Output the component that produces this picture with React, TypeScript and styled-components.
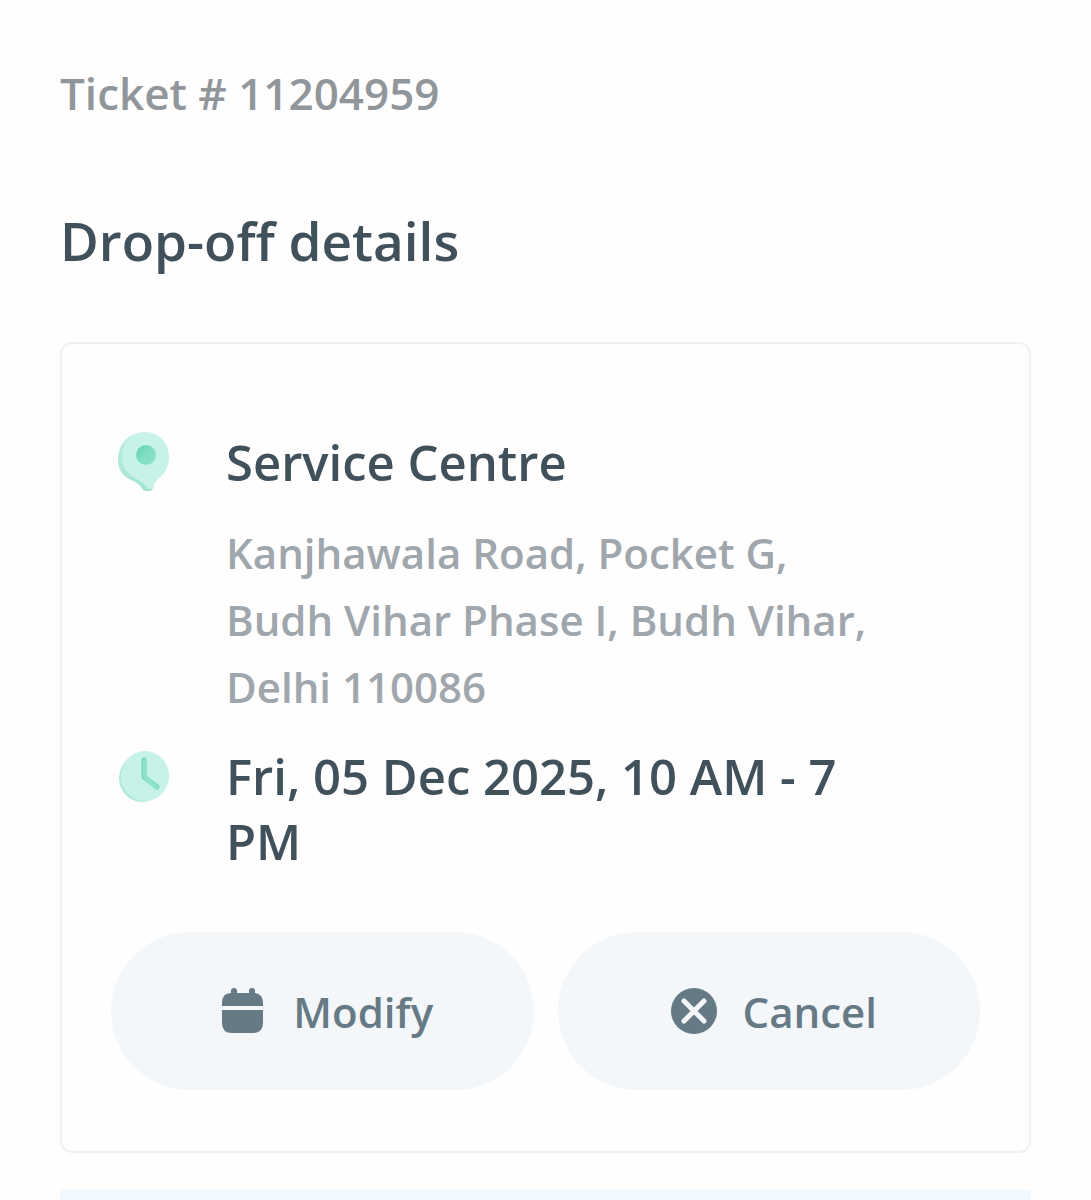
import React from "react";
import styled, { createGlobalStyle } from "styled-components";

const GlobalStyle = createGlobalStyle`
  *, *::before, *::after { box-sizing: border-box; }
  body {
    margin: 0;
    background: #fefefe;
    font-family: "Open Sans", "Noto Sans", sans-serif;
    font-weight: 600;
    color: #41515c;
  }
`;

const Page = styled.main`
  display: flex;
  flex-direction: column;
  padding: 62px 60px 0;
  min-height: 100vh;
`;

const Ticket = styled.p`
  margin: 0;
  font-size: 44px;
  line-height: 62px;
  color: #909699;
`;

const Title = styled.h1`
  margin: 82px 0 66px;
  font-size: 53px;
  line-height: 70px;
  font-weight: 600;
`;

const Card = styled.section`
  border: 2px solid #f1f1f1;
  border-radius: 12px;
  padding: 86px 49px 61px;
`;

const Detail = styled.div`
  display: flex;
  gap: 56px;
  padding: 0 90px 0 7px;
`;

const DetailIcon = styled.svg`
  flex: none;
  width: 52px;
  height: 60px;
  margin-top: 2px;
`;

const DetailText = styled.div`
  flex: 1;
  min-width: 0;
`;

const DetailTitle = styled.h2`
  margin: 0;
  font-size: 49px;
  line-height: 65px;
  font-weight: 600;
`;

const Address = styled.address`
  margin: 24px 0;
  font-size: 42px;
  line-height: 67px;
  font-style: normal;
  color: #9fa6ac;
`;

const Actions = styled.div`
  display: grid;
  grid-template-columns: 1fr 1fr;
  gap: 24px;
  margin-top: 58px;
`;

const ActionButton = styled.button`
  display: flex;
  align-items: center;
  justify-content: center;
  gap: 26px;
  height: 158px;
  padding: 0 0 0 10px;
  border: 0;
  border-radius: 79px;
  background: #f3f7fa;
  color: #667a86;
  font: inherit;
  font-size: 42px;
  cursor: pointer;
`;

const ActionIcon = styled.svg`
  flex: none;
  width: 46px;
  height: 46px;
`;

const NextPanel = styled.div`
  flex: 1;
  min-height: 10px;
  margin-top: 37px;
  background: #f1f8fe;
`;

const PinIcon = () => (
  <DetailIcon viewBox="0 0 52 60" aria-hidden="true">
    <defs>
      <linearGradient id="pinSide" x1="0" y1="0" x2="0" y2="1">
        <stop offset="0" stopColor="#bdeee1" />
        <stop offset="1" stopColor="#a3e3d1" />
      </linearGradient>
      <linearGradient id="pinHole" x1="0" y1="0" x2="1" y2="1">
        <stop offset="0" stopColor="#62d0b0" />
        <stop offset="0.5" stopColor="#80dec3" />
        <stop offset="1" stopColor="#8ee5cc" />
      </linearGradient>
    </defs>
    <path
      d="M22 1C8 3 0 14 0 28C0 38 5 44 13 48C20 51 22 53 25 58Q26 59 28 59H32Q34 59 35 56L40 10Z"
      fill="url(#pinSide)"
    />
    <path
      d="M27 0C41 0 51 11 51 25C51 36 46 42 40 47C36 51 36 54 33 57Q31 58 29 55C25 49 19 48 14 44C7 39 4 33 4 25C4 11 13 0 27 0Z"
      fill="#c6f2e7"
    />
    <circle cx="28" cy="23" r="10" fill="url(#pinHole)" />
  </DetailIcon>
);

const ClockIcon = () => (
  <DetailIcon viewBox="0 0 52 60" aria-hidden="true">
    <ellipse cx="24" cy="32" rx="23" ry="24" fill="#b2eadb" />
    <ellipse cx="27" cy="30" rx="24" ry="25" fill="#c6f2e7" />
    <path d="M26 14V31L39 41" fill="none" stroke="#74d6ba" strokeWidth="5" strokeLinecap="round" strokeLinejoin="round" />
    <path d="M27 15V31L39 42" fill="none" stroke="#8fe2ca" strokeWidth="4" strokeLinecap="round" strokeLinejoin="round" />
  </DetailIcon>
);

const CalendarIcon = () => (
  <ActionIcon viewBox="0 0 46 46" aria-hidden="true" fill="currentColor">
    <path d="M1 18V15Q1 5 10 5V3a3 3 0 0 1 6 0V5H28V3a3 3 0 0 1 6 0V5Q42 6 42 15V18Z" />
    <path d="M1 22H42V35Q42 45 32 45H11Q1 45 1 35Z" />
  </ActionIcon>
);

const CancelIcon = () => (
  <ActionIcon viewBox="0 0 46 46" aria-hidden="true">
    <circle cx="23" cy="23" r="23" fill="currentColor" />
    <path d="M13 13L33 33M33 13L13 33" stroke="#f3f7fa" strokeWidth="5" strokeLinecap="round" />
  </ActionIcon>
);

export default function App() {
  return (
    <>
      <GlobalStyle />
      <Page>
        <Ticket>Ticket # 11204959</Ticket>
        <Title>Drop-off details</Title>
        <Card>
          <Detail>
            <PinIcon />
            <DetailText>
              <DetailTitle>Service Centre</DetailTitle>
              <Address>Kanjhawala Road, Pocket G, Budh Vihar Phase I, Budh Vihar, Delhi 110086</Address>
            </DetailText>
          </Detail>
          <Detail>
            <ClockIcon />
            <DetailText>
              <DetailTitle>Fri, 05 Dec 2025, 10 AM - 7 PM</DetailTitle>
            </DetailText>
          </Detail>
          <Actions>
            <ActionButton type="button">
              <CalendarIcon />
              Modify
            </ActionButton>
            <ActionButton type="button">
              <CancelIcon />
              Cancel
            </ActionButton>
          </Actions>
        </Card>
        <NextPanel />
      </Page>
    </>
  );
}
